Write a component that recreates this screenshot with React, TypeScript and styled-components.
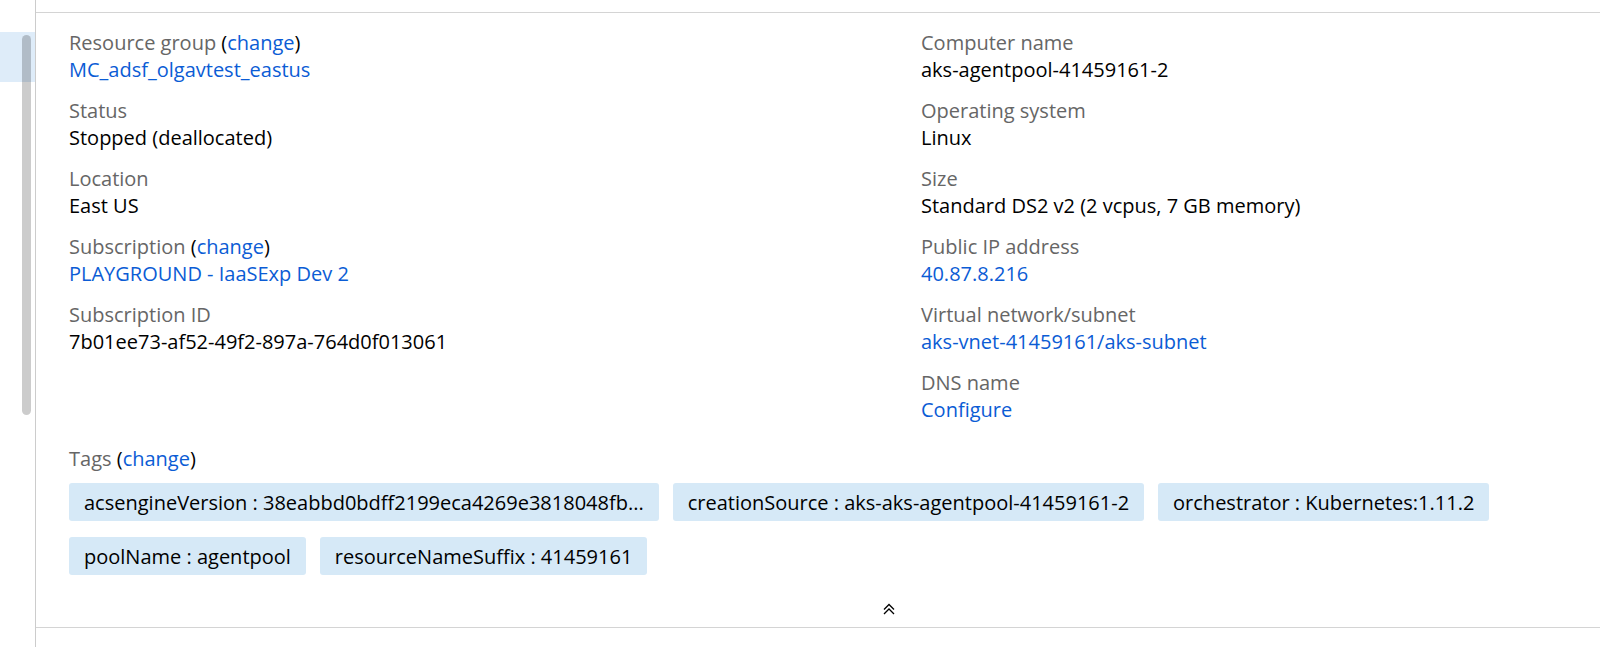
import React from "react";
import styled, { createGlobalStyle } from "styled-components";

const GlobalStyle = createGlobalStyle`
  html, body {
    margin: 0;
    padding: 0;
    background: #ffffff;
  }
  body {
    font-family: "Open Sans", "Segoe UI", "Liberation Sans", sans-serif;
    font-size: 20px;
    color: #000000;
  }
`;

const Page = styled.div`
  display: flex;
  height: 647px;
  overflow: hidden;
`;

const NavStrip = styled.div`
  position: relative;
  width: 35px;
  flex-shrink: 0;
  border-right: 1px solid #cccccc;
`;

const NavHighlight = styled.div`
  margin-top: 32px;
  height: 50px;
  background: #deecf9;
`;

const ScrollThumb = styled.div`
  position: absolute;
  left: 22px;
  top: 35px;
  width: 9px;
  height: 380px;
  border-radius: 5px;
  background: rgba(0, 0, 0, 0.2);
`;

const Main = styled.div`
  flex: 1;
  padding-top: 12px;
  display: flex;
  flex-direction: column;
`;

const Essentials = styled.section`
  border-top: 1px solid #d4d4d4;
  border-bottom: 1px solid #d4d4d4;
  padding: 16px 0 0 33px;
`;

const Grid = styled.div`
  display: grid;
  grid-template-columns: 852px 1fr;
`;

const Column = styled.div`
  display: flex;
  flex-direction: column;
`;

const Field = styled.div`
  display: flex;
  flex-direction: column;
  margin-bottom: 14px;
`;

const Label = styled.div`
  color: #666666;
  line-height: 27px;
`;

const Paren = styled.span`
  color: #000000;
`;

const Value = styled.div`
  line-height: 27px;
  color: #000000;
`;

const Link = styled.a`
  color: #0b5cd5;
  text-decoration: none;
  cursor: pointer;
`;

const TagsSection = styled.div`
  margin-top: 8px;
  display: flex;
  flex-direction: column;
`;

const TagList = styled.div`
  display: flex;
  flex-wrap: wrap;
  column-gap: 14px;
  row-gap: 16px;
  margin-top: 11px;
  max-width: 1440px;
`;

const Tag = styled.div`
  height: 38px;
  display: flex;
  align-items: center;
  padding: 0 15px;
  background: #d6e9f7;
  border-radius: 3px;
  white-space: nowrap;
  color: #000000;
`;

const Footer = styled.div`
  height: 52px;
  display: flex;
  align-items: flex-end;
  padding: 0 0 12px 814px;
  box-sizing: border-box;
`;

const CollapseButton = styled.button`
  border: none;
  background: none;
  padding: 0;
  width: 12px;
  height: 12px;
  display: flex;
  cursor: pointer;
`;

type FieldData = {
  label: string;
  change?: boolean;
  value: string;
  link?: boolean;
};

const left: FieldData[] = [
  { label: "Resource group", change: true, value: "MC_adsf_olgavtest_eastus", link: true },
  { label: "Status", value: "Stopped (deallocated)" },
  { label: "Location", value: "East US" },
  { label: "Subscription", change: true, value: "PLAYGROUND - IaaSExp Dev 2", link: true },
  { label: "Subscription ID", value: "7b01ee73-af52-49f2-897a-764d0f013061" },
];

const right: FieldData[] = [
  { label: "Computer name", value: "aks-agentpool-41459161-2" },
  { label: "Operating system", value: "Linux" },
  { label: "Size", value: "Standard DS2 v2 (2 vcpus, 7 GB memory)" },
  { label: "Public IP address", value: "40.87.8.216", link: true },
  { label: "Virtual network/subnet", value: "aks-vnet-41459161/aks-subnet", link: true },
  { label: "DNS name", value: "Configure", link: true },
];

const tags = [
  "acsengineVersion : 38eabbd0bdff2199eca4269e3818048fb...",
  "creationSource : aks-aks-agentpool-41459161-2",
  "orchestrator : Kubernetes:1.11.2",
  "poolName : agentpool",
  "resourceNameSuffix : 41459161",
];

const ChangeLabel: React.FC<{ text: string; change?: boolean }> = ({ text, change }) => (
  <Label>
    {text}
    {change && (
      <>
        {" "}
        <Paren>(</Paren>
        <Link>change</Link>
        <Paren>)</Paren>
      </>
    )}
  </Label>
);

const FieldView: React.FC<{ f: FieldData }> = ({ f }) => (
  <Field>
    <ChangeLabel text={f.label} change={f.change} />
    <Value>{f.link ? <Link>{f.value}</Link> : f.value}</Value>
  </Field>
);

export default function App() {
  return (
    <>
      <GlobalStyle />
      <Page>
        <NavStrip>
          <NavHighlight />
          <ScrollThumb />
        </NavStrip>
        <Main>
          <Essentials>
            <Grid>
              <Column>
                {left.map((f) => (
                  <FieldView key={f.label} f={f} />
                ))}
              </Column>
              <Column>
                {right.map((f) => (
                  <FieldView key={f.label} f={f} />
                ))}
              </Column>
            </Grid>
            <TagsSection>
              <ChangeLabel text="Tags" change />
              <TagList>
                {tags.map((t) => (
                  <Tag key={t}>{t}</Tag>
                ))}
              </TagList>
            </TagsSection>
            <Footer>
              <CollapseButton aria-label="Collapse">
                <svg width="12" height="12" viewBox="0 0 12 12" fill="none">
                  <path
                    d="M1 6.5 L6 1.5 L11 6.5 M1 11 L6 6 L11 11"
                    stroke="#000"
                    strokeWidth="1.3"
                  />
                </svg>
              </CollapseButton>
            </Footer>
          </Essentials>
        </Main>
      </Page>
    </>
  );
}
